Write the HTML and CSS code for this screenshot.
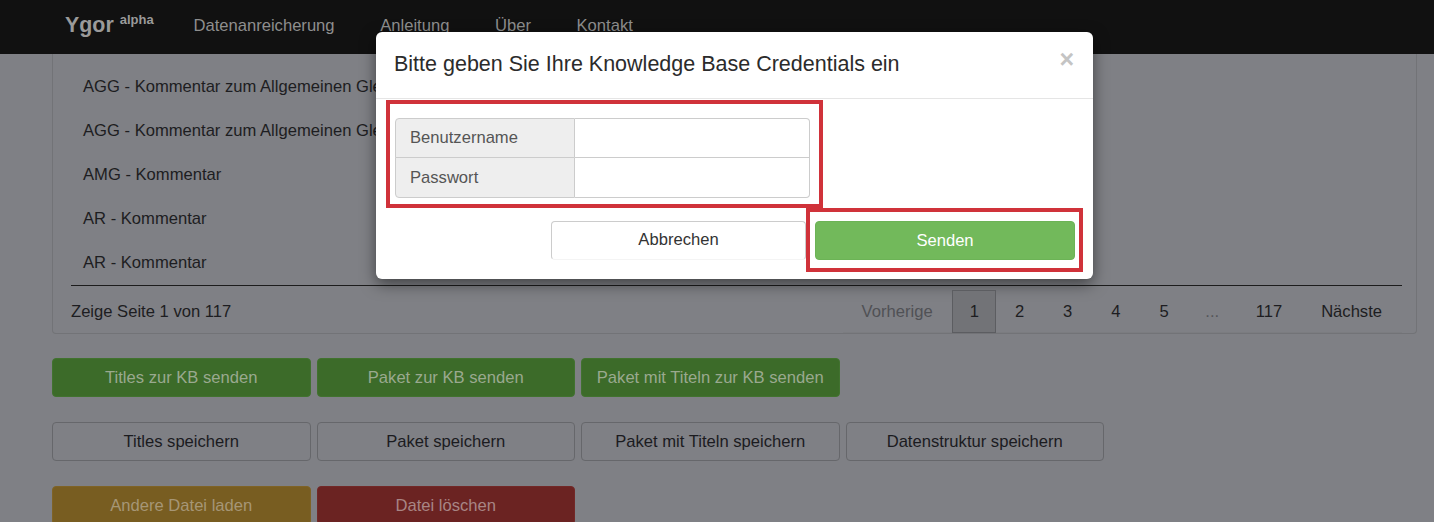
FILE: index.html
```html
<!DOCTYPE html>
<html lang="de">
<head>
<meta charset="utf-8">
<title>Ygor</title>
<link rel="stylesheet" href="styles.css">
</head>
<body>
<nav class="navbar">
  <a class="brand">Ygor <sup>alpha</sup></a>
  <ul class="nav">
    <li>Datenanreicherung</li>
    <li>Anleitung</li>
    <li>Über</li>
    <li>Kontakt</li>
  </ul>
</nav>
<main class="page">
  <section class="panel">
    <ul class="titles">
      <li>AGG - Kommentar zum Allgemeinen Gleichbehandlungsgesetz</li>
      <li>AGG - Kommentar zum Allgemeinen Gleichbehandlungsgesetz</li>
      <li>AMG - Kommentar</li>
      <li>AR - Kommentar</li>
      <li>AR - Kommentar</li>
    </ul>
    <div class="panel-footer">
      <span class="page-info">Zeige Seite 1 von 117</span>
      <ul class="pagination">
        <li class="disabled">Vorherige</li>
        <li class="active">1</li>
        <li>2</li>
        <li>3</li>
        <li>4</li>
        <li>5</li>
        <li class="ellipsis">...</li>
        <li>117</li>
        <li>Nächste</li>
      </ul>
    </div>
  </section>
  <div class="btn-row">
    <button class="btn btn-success">Titles zur KB senden</button>
    <button class="btn btn-success">Paket zur KB senden</button>
    <button class="btn btn-success">Paket mit Titeln zur KB senden</button>
  </div>
  <div class="btn-row">
    <button class="btn btn-default">Titles speichern</button>
    <button class="btn btn-default">Paket speichern</button>
    <button class="btn btn-default">Paket mit Titeln speichern</button>
    <button class="btn btn-default">Datenstruktur speichern</button>
  </div>
  <div class="btn-row">
    <button class="btn btn-warning">Andere Datei laden</button>
    <button class="btn btn-danger">Datei löschen</button>
  </div>
</main>

<div class="modal">
  <div class="modal-header">
    <h4 class="modal-title">Bitte geben Sie Ihre Knowledge Base Credentials ein</h4>
    <span class="close">×</span>
  </div>
  <div class="modal-body">
    <div class="highlight highlight-form">
      <div class="input-group">
        <label class="addon">Benutzername</label>
        <input class="field" type="text">
        <label class="addon">Passwort</label>
        <input class="field" type="password">
      </div>
    </div>
  </div>
  <div class="modal-footer">
    <button class="mbtn mbtn-default">Abbrechen</button>
    <div class="highlight highlight-send">
      <button class="mbtn mbtn-success">Senden</button>
    </div>
  </div>
</div>
</body>
</html>
```
FILE: styles.css
```css
* { box-sizing: border-box; }

html, body {
  margin: 0;
  height: 522px;
  overflow: hidden;
}

body {
  background: #7f8085;
  font-family: "Liberation Sans", Arial, sans-serif;
  font-size: 16.6px;
  color: #1d1d21;
}

ul { list-style: none; margin: 0; padding: 0; }

/* navbar */
.navbar {
  height: 54px;
  background: #111111;
  display: flex;
  align-items: center;
  padding: 0 0 4px 65px;
}

.brand {
  font-size: 21.4px;
  font-weight: bold;
  color: #9a9a9a;
  line-height: 1;
}

.brand sup {
  font-size: 13px;
  vertical-align: 8px;
}

.nav {
  display: flex;
  margin-left: 17px;
  margin-top: 2px;
}

.nav li {
  padding: 0 22.8px;
  color: #8e8e8e;
}

/* page */
.page {
  padding: 0 17px 0 52px;
}

.panel {
  border: 1px solid #727377;
  border-top: 0;
  border-radius: 0 0 4px 4px;
  padding: 11px 14px 0 18px;
}

.titles {
  overflow: hidden;
}

.titles li {
  height: 44px;
  line-height: 44px;
  padding-left: 12px;
  white-space: nowrap;
}

.panel-footer {
  border-top: 1px solid #1c1c1c;
  display: flex;
  justify-content: space-between;
  align-items: flex-start;
  padding-top: 4px;
}

.page-info {
  line-height: 43px;
}

.pagination {
  display: flex;
  box-shadow: inset 0 -1px 0 rgba(0, 0, 0, 0.03);
}

.pagination li {
  height: 43px;
  line-height: 41px;
  padding: 0 19px;
  border: 1px solid transparent;
  margin-left: -1px;
  color: #1d1d21;
}

.pagination .disabled {
  color: #505155;
}

.pagination .ellipsis {
  color: #55565a;
  padding: 0 16.5px;
}

.pagination .active {
  background: #727377;
  border-color: #5c5d61;
  position: relative;
  z-index: 1;
  padding: 0 16px 0 17px;
}

/* buttons */
.btn-row {
  display: flex;
  gap: 6px;
  margin-top: 24px;
}

.btn-row + .btn-row {
  margin-top: 25px;
}

.btn {
  width: 258.5px;
  height: 39px;
  border-radius: 4px;
  font-family: inherit;
  font-size: 16.6px;
  border: 1px solid transparent;
  padding: 0;
}

.btn-success {
  background: #3c6b29;
  border-color: #41722f;
  color: #9aa98f;
}

.btn-default {
  background: #7f8085;
  border-color: #66676b;
  color: #1b1b1f;
}

.btn-warning {
  background: #785d21;
  border-color: #7f6326;
  color: #a69676;
}

.btn-danger {
  background: #6b2322;
  border-color: #722827;
  color: #a88585;
}

/* modal */
.modal {
  position: absolute;
  top: 32px;
  left: 376px;
  width: 717px;
  background: #ffffff;
  border-radius: 6px;
  box-shadow: 0 5px 15px rgba(0, 0, 0, 0.5);
  color: #333333;
}

.modal-header {
  height: 67px;
  border-bottom: 1px solid #e5e5e5;
  display: flex;
  align-items: center;
  justify-content: space-between;
  padding: 0 19px 2px 18px;
}

.modal-title {
  margin: 0;
  font-size: 21.5px;
  font-weight: normal;
  color: #2b2b2b;
}

.close {
  font-size: 25px;
  font-weight: bold;
  line-height: 1;
  color: #c4c4c4;
  align-self: flex-start;
  margin-top: 15px;
}

.modal-body {
  padding: 1px 10px 0;
}

.highlight {
  border: 4px solid #d0323a;
}

.highlight-form {
  width: 437px;
  padding: 14px 9px 6px 5px;
}

.input-group {
  display: grid;
  grid-template-columns: 180px 235px;
  grid-template-rows: 40px 40px;
}

.addon {
  background: #eeeeee;
  border: 1px solid #cccccc;
  color: #555555;
  padding-left: 14px;
  display: flex;
  align-items: center;
}

.field {
  border: 1px solid #cccccc;
  border-left: 0;
  background: #ffffff;
  font: inherit;
  margin: 0;
}

.input-group .addon:nth-child(1) { border-radius: 4px 0 0 0; }
.input-group .field:nth-child(2) { border-radius: 0 4px 0 0; }
.input-group .addon:nth-child(3) { border-radius: 0 0 0 4px; margin-top: -1px; height: 41px; }
.input-group .field:nth-child(4) { border-radius: 0 0 4px 0; margin-top: -1px; height: 41px; }

.modal-footer {
  display: flex;
  justify-content: flex-end;
  align-items: center;
  padding: 0 10px 7px;
}

.highlight-send {
  padding: 9px 4px 8px 5px;
}

.mbtn {
  height: 39px;
  font-family: inherit;
  font-size: 16.6px;
  border-radius: 4px;
  padding: 0;
}

.mbtn-default {
  width: 255px;
  background: #ffffff;
  border: 1px solid #cccccc;
  border-bottom-color: #f4f4f4;
  color: #333333;
}

.mbtn-success {
  width: 260px;
  background: #72b95b;
  border: 1px solid #6cb356;
  color: #ffffff;
  display: block;
}
```
